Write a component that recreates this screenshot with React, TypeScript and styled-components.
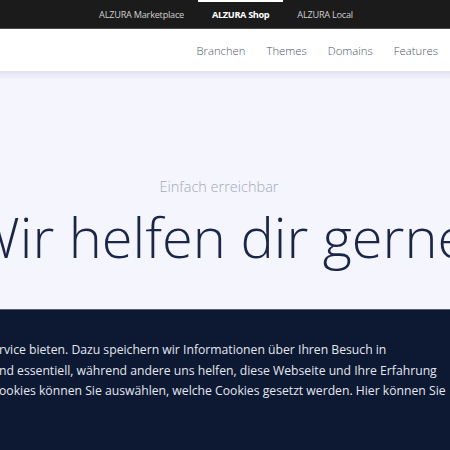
import React from "react";
import styled, { createGlobalStyle } from "styled-components";

const Global = createGlobalStyle`
  html, body { margin: 0; padding: 0; }
  body {
    width: 450px;
    height: 450px;
    overflow: hidden;
    font-family: "Open Sans", "Noto Sans", sans-serif;
    background: #f4f5fd;
  }
`;

const Page = styled.div`
  display: flex;
  flex-direction: column;
  width: 450px;
  height: 450px;
  overflow: hidden;
`;

const TopBar = styled.div`
  flex: none;
  height: 28px;
  background: #1b1b1b;
  border-bottom: 1px solid #4a4a4a;
  display: flex;
  justify-content: center;
  align-items: stretch;
  padding-left: 2px;
`;

const PortalLink = styled.a<{ $active?: boolean }>`
  position: relative;
  display: flex;
  align-items: center;
  padding: 1px 14px 0;
  font-size: 9.2px;
  letter-spacing: ${(p) => (p.$active ? "-0.35px" : "-0.25px")};
  color: ${(p) => (p.$active ? "#ffffff" : "#d0d0d0")};
  font-weight: ${(p) => (p.$active ? 700 : 400)};
  text-decoration: none;
  white-space: nowrap;
  &::before {
    content: "";
    display: ${(p) => (p.$active ? "block" : "none")};
    position: absolute;
    top: 0;
    left: 0;
    right: 0;
    height: 2px;
    background: #ffffff;
  }
`;

const NavBar = styled.nav`
  flex: none;
  height: 42px;
  background: #ffffff;
  display: flex;
  justify-content: flex-end;
  align-items: center;
  gap: 21px;
  padding-right: 12px;
  padding-top: 1px;
  box-sizing: border-box;
`;

const NavLink = styled.a`
  font-size: 11.3px;
  font-weight: 300;
  color: #4f5668;
  text-decoration: none;
  white-space: nowrap;
`;

const Hero = styled.section`
  flex: 0 0 239px;
  background: linear-gradient(#e1e2ee 0px, #f4f5fd 9px, #f4f5fd 100%);
  display: flex;
  flex-direction: column;
  align-items: center;
  padding-top: 106px;
  box-sizing: border-box;
  border-bottom: 1px solid #5d6273;
`;

const Kicker = styled.div`
  font-size: 14.5px;
  font-weight: 300;
  color: #a4a9c0;
  line-height: 20px;
  margin-left: -12px;
`;

const TitleRow = styled.div`
  width: 450px;
  display: flex;
  justify-content: center;
  margin-top: 3px;
`;

const Title = styled.h1`
  margin: 0;
  flex: none;
  font-size: 56px;
  font-weight: 300;
  color: #1b2547;
  line-height: 72px;
  white-space: nowrap;
  margin-left: -12px;
`;

const CookieBanner = styled.section`
  flex: 1;
  background: #0d1833;
  padding-top: 30px;
  overflow: hidden;
`;

const CookieText = styled.p`
  margin: 0;
  font-size: 12.2px;
  line-height: 20.5px;
  color: #e4e7ee;
  white-space: nowrap;
  margin-left: -1px;
`;

export default function App() {
  return (
    <Page>
      <Global />
      <TopBar>
        <PortalLink>ALZURA Marketplace</PortalLink>
        <PortalLink $active>ALZURA Shop</PortalLink>
        <PortalLink>ALZURA Local</PortalLink>
      </TopBar>
      <NavBar>
        <NavLink>Branchen</NavLink>
        <NavLink>Themes</NavLink>
        <NavLink>Domains</NavLink>
        <NavLink>Features</NavLink>
      </NavBar>
      <Hero>
        <Kicker>Einfach erreichbar</Kicker>
        <TitleRow>
          <Title>Wir helfen dir gerne</Title>
        </TitleRow>
      </Hero>
      <CookieBanner>
        <CookieText>
          rvice bieten. Dazu speichern wir Informationen über Ihren Besuch in
          <br />
          nd essentiell, während andere uns helfen, diese Webseite und Ihre Erfahrung
          <br />
          ookies können Sie auswählen, welche Cookies gesetzt werden. Hier können Sie
        </CookieText>
      </CookieBanner>
    </Page>
  );
}
